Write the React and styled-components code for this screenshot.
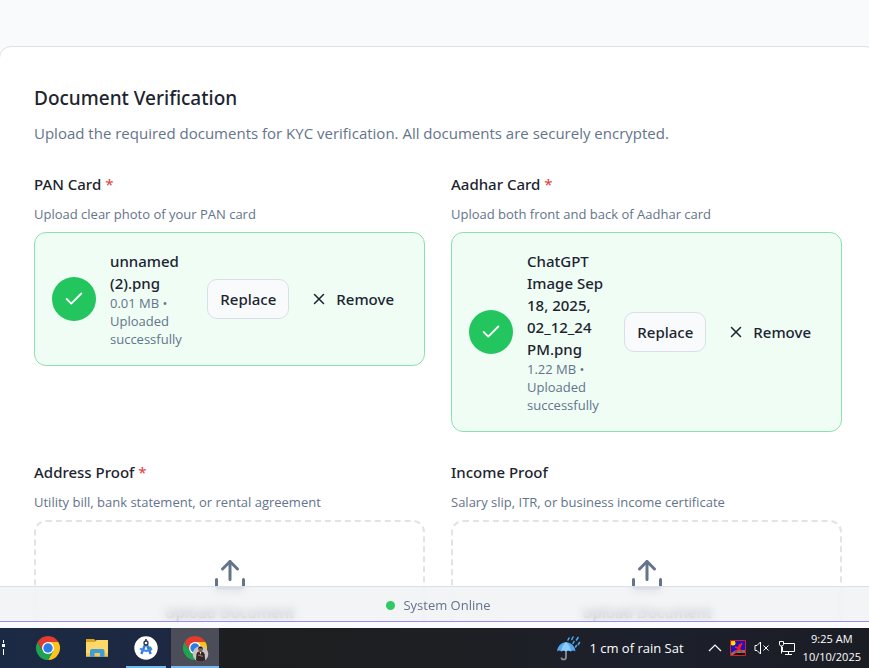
import React, { useId, useRef } from "react";
import styled, { createGlobalStyle } from "styled-components";
import { Check, Upload, X } from "lucide-react";

const lightText = '"Open Sans", "Noto Sans", sans-serif';

const Global = createGlobalStyle`
  *, *::before, *::after { box-sizing: border-box; }
  body {
    margin: 0;
    font-family: "Noto Sans", "Open Sans", sans-serif;
    color: #1c2430;
    background: #fbfbfe;
  }
  h1, p { margin: 0; }
  button { font: inherit; color: inherit; cursor: pointer; }
`;

const Desktop = styled.div`
  display: flex;
  flex-direction: column;
  height: 100vh;
`;

const Viewport = styled.div`
  position: relative;
  flex: 1;
  min-height: 0;
  overflow: hidden;
  margin-bottom: 6px;
  padding-top: 46px;
  background: #f9fafc;
  border-bottom: 1px solid #9c8fe6;
`;

const Panel = styled.main`
  margin: 0 -8px 0 -1px;
  padding: 36px 34px;
  background: #fff;
  border: 1px solid #d9e0ea;
  border-radius: 12px;
`;

const Title = styled.h1`
  font-size: 19px;
  line-height: 30px;
  font-weight: 500;
`;

const Subtitle = styled.p`
  margin-top: 8px;
  font-family: ${lightText};
  font-size: 15px;
  line-height: 24px;
  color: #64748b;
`;

const Fields = styled.div`
  display: grid;
  grid-template-columns: repeat(2, minmax(0, 1fr));
  gap: 28px 26px;
  align-items: start;
  margin-top: 27px;
`;

const Field = styled.section`
  display: flex;
  flex-direction: column;
  gap: 8px;
`;

const FieldLabel = styled.label`
  font-size: 15px;
  line-height: 24px;
  font-weight: 500;
`;

const Required = styled.span`
  font-weight: 400;
  color: #e5383b;
`;

const Hint = styled.p`
  font-family: ${lightText};
  font-size: 13px;
  line-height: 20px;
  color: #64748b;
`;

const FileCard = styled.div`
  display: flex;
  align-items: center;
  gap: 14px;
  padding: 17px;
  background: #effdf5;
  border: 1px solid #8ee0ae;
  border-radius: 12px;
`;

const CheckBadge = styled.span`
  display: flex;
  align-items: center;
  justify-content: center;
  flex: none;
  width: 44px;
  height: 44px;
  border-radius: 50%;
  background: #22c55e;
  color: #fff;
`;

const FileInfo = styled.div`
  flex: 1;
  min-width: 0;
`;

const FileName = styled.p`
  font-size: 15px;
  line-height: 22px;
  font-weight: 500;
`;

const FileMeta = styled.p`
  font-family: ${lightText};
  font-size: 13px;
  line-height: 18px;
  color: #64748b;
`;

const Actions = styled.div`
  display: flex;
  flex: none;
  gap: 8px;
`;

const ActionButton = styled.button`
  display: flex;
  align-items: center;
  gap: 8px;
  height: 40px;
  padding: 0 12px;
  font-size: 15px;
  font-weight: 500;
  border: 1px solid ${(p) => (p.$ghost ? "transparent" : "#d9dfea")};
  border-radius: 10px;
  background: ${(p) => (p.$ghost ? "transparent" : "#f9fafc")};
`;

const DropZone = styled.button`
  display: flex;
  flex-direction: column;
  align-items: center;
  gap: 7px;
  padding: 35px 16px;
  font-size: 15px;
  line-height: 24px;
  font-weight: 500;
  background: #fff;
  border: 2px dashed #e1e3e8;
  border-radius: 12px;

  svg { color: #64748b; }
`;

const StatusBar = styled.footer`
  position: absolute;
  inset: auto -8px 0 0;
  display: flex;
  align-items: center;
  justify-content: center;
  gap: 8px;
  height: 35px;
  padding-top: 2px;
  border-top: 1px solid #d9e0ea;
  background: rgba(238, 240, 243, 0.74);
  backdrop-filter: blur(4px);
  font-family: ${lightText};
  font-size: 13px;
  line-height: 20px;
  color: #64748b;
`;

const StatusDot = styled.span`
  width: 9px;
  height: 9px;
  border-radius: 50%;
  background: #30c965;
`;

const Taskbar = styled.nav`
  display: flex;
  flex: none;
  align-items: stretch;
  height: 40px;
  background: linear-gradient(90deg, #1b2a44 0, #1d2842 19%, #1d1e20 26%, #1e1f22 50%, #1c202c 75%, #1b1d24 100%);
  color: #fff;
`;

const Splitter = styled.span`
  display: flex;
  align-items: center;
  width: 24px;
`;

const Apps = styled.div`
  display: flex;
  gap: 1px;
`;

const AppButton = styled.button`
  display: flex;
  align-items: center;
  justify-content: center;
  width: 48px;
  padding: 0;
  border: 0;
  background: ${(p) => (p.$active ? "#4b4d58" : "transparent")};
  background-image: ${(p) => (p.$running || p.$active ? "linear-gradient(#76b9ed, #76b9ed)" : "none")};
  background-repeat: no-repeat;
  background-position: bottom;
  background-size: ${(p) => (p.$active ? "48px" : "40px")} 2px;
`;

const Tray = styled.div`
  display: flex;
  align-items: center;
  gap: 8px;
  margin-left: auto;
  padding-right: 8px;
`;

const TrayButton = styled.button`
  display: flex;
  align-items: center;
  gap: 8px;
  padding: 0;
  border: 0;
  background: none;
  font-family: ${lightText};
  font-size: 13px;
  color: #fff;
`;

const Weather = styled(TrayButton)`
  margin-right: 16px;
`;

const Clock = styled.time`
  font-family: ${lightText};
  font-size: 11px;
  line-height: 18px;
  text-align: center;
`;

function ChromeIcon({ avatar }) {
  return (
    <svg width="28" height="28" viewBox="0 0 28 28" aria-hidden="true">
      <path d="M14 8H24.4A12 12 0 0 1 14 26L19.2 17Z" fill="#fcc31e" />
      <path d="M3.6 8 8.8 17 14 20 19.2 17 14 26A12 12 0 0 1 3.6 8Z" fill="#1ea352" />
      <path d="M3.6 8A12 12 0 0 1 24.4 8H14L8.8 17Z" fill="#e33b2e" />
      <circle cx="14" cy="14" r="6" fill="#fff" />
      <circle cx="14" cy="14" r="4.7" fill="#2b7de9" />
      {avatar && (
        <g>
          <circle cx="19.5" cy="20" r="7.8" fill="#c9c4c3" />
          <path d="M15 26.3 15.5 20q.5-2 2.5-2.4h3q2.2.5 2.6 2.6l.6 6q-4.5 3.2-9.2.1Z" fill="#35242a" />
          <circle cx="19.5" cy="15.6" r="2.3" fill="#8a5e4c" />
          <path d="M17.2 15.2q0-2.6 2.3-2.6t2.3 2.6l-1-1h-2.6Z" fill="#241b1d" />
          <path d="M18.7 18h1.6l-.8 3Z" fill="#ddd" />
          <path d="m17 21 5 1.3" stroke="#9c7060" strokeWidth="1.2" />
        </g>
      )}
    </svg>
  );
}

function FolderIcon() {
  return (
    <svg width="24" height="24" viewBox="0 0 24 24" aria-hidden="true">
      <path d="M1 3h8l2 2v4H1Z" fill="#e2a21c" />
      <path d="M1 6h9l1.5-2H23v16.5H1Z" fill="#fbd867" />
      <path d="M1 17h22v3.5H1Z" fill="#f4c84e" />
      <path d="M5 21v-6q0-2 2-2h10.5q2 0 2 2v6H15v-4H9.5v4Z" fill="#3f9bdc" />
    </svg>
  );
}

function StudioIcon() {
  return (
    <svg width="24" height="24" viewBox="0 0 24 24" fill="none" aria-hidden="true">
      <circle cx="12" cy="12" r="11.7" fill="#fff" />
      <path d="M13 10.500h4l1.500 3.500-3 1Z" fill="#34a853" />
      <path d="M12 6.5 7.3 18M12 6.5 16.7 18" stroke="#3478e5" strokeWidth="2.4" />
      <path d="M6 12.5q6 4.6 11.5.3" stroke="#4285f4" strokeWidth="2.2" />
      <circle cx="12" cy="7" r="2" fill="#fff" stroke="#27364b" strokeWidth="1.3" />
      <path d="M12 3v2" stroke="#27364b" strokeWidth="1.6" />
    </svg>
  );
}

function UmbrellaIcon() {
  return (
    <svg width="25" height="25" viewBox="0 0 25 25" fill="none" aria-hidden="true">
      <path d="M10 8v13q0 2.5-2.3 2.5T5.5 21.5" stroke="#8d949d" strokeWidth="1.7" />
      <path d="M1 15.5Q2 7 10 6q8.5 1 9.5 9.5-2.3-2-4.6 0-2.4-2-4.9 0-2.4-2-4.7 0-2-2-4.3 0Z" fill="#56a9ef" />
      <path d="M5.3 15.5Q6 9 10 6q4 3 4.9 9.5-2.4-2-4.9 0-2.4-2-4.7 0Z" fill="#8cccfa" />
      <path d="m13 2-1 2m5-3-1.2 2.5M22 1.5 20.5 4M18 5.5 17 7.5M23.5 6.5l-1.2 2M20.5 9.5l-1 1.5" stroke="#4da8f4" strokeWidth="1.5" strokeLinecap="round" />
    </svg>
  );
}

function MonitorAppIcon() {
  return (
    <svg width="16" height="16" viewBox="0 0 16 16" aria-hidden="true">
      <path d="M0 0h16v16H0Z" fill="#1414c8" />
      <path d="M1 13l5-3h9v5H1Z" fill="#777" />
      <path d="M6 13h9v2H3Z" fill="#111" />
      <circle cx="3" cy="3" r="2.5" fill="#ffe600" />
      <path d="m5 7 3 1 2-4M12 3l-2 4-5 6M9 8l3 4" stroke="#ff1c1c" strokeWidth="1.6" fill="none" />
      <path d="M.5.5h15v15H.5Z" fill="none" stroke="#e81818" />
    </svg>
  );
}

function MutedIcon() {
  return (
    <svg width="16" height="16" viewBox="0 0 16 16" fill="none" stroke="#fff" aria-hidden="true">
      <path d="M1 5.5h2L6.5 2v12L3 10.5H1ZM9.500 5.5l5 5m0-5-5 5" />
    </svg>
  );
}

function NetworkIcon() {
  return (
    <svg width="17" height="16" viewBox="0 0 17 16" fill="none" stroke="#fff" aria-hidden="true">
      <path d="M5.5 3.5h11v8h-12V7M10.5 11.5v3M7 14.5h7M1.5 1.5h4v3q0 1.5-2 1.5t-2-1.5ZM3.5 6v7.5" />
    </svg>
  );
}

function ChevronUpIcon() {
  return (
    <svg width="14" height="14" viewBox="0 0 14 14" fill="none" stroke="#fff" strokeWidth="1.2" aria-hidden="true">
      <path d="m1 10 6-6 6 6" />
    </svg>
  );
}

function SplitterIcon() {
  return (
    <svg width="6" height="16" viewBox="0 0 6 16" fill="#fff" aria-hidden="true">
      <path d="M3 0h1v3H3ZM2 4h3v3H2ZM3 9h1v6H3Z" />
    </svg>
  );
}

const documents = [
  {
    label: "PAN Card",
    required: true,
    hint: "Upload clear photo of your PAN card",
    file: { name: "unnamed (2).png", size: "0.01 MB" },
  },
  {
    label: "Aadhar Card",
    required: true,
    hint: "Upload both front and back of Aadhar card",
    file: { name: "ChatGPT Image Sep 18, 2025, 02_12_24 PM.png", size: "1.22 MB" },
  },
  {
    label: "Address Proof",
    required: true,
    hint: "Utility bill, bank statement, or rental agreement",
  },
  {
    label: "Income Proof",
    hint: "Salary slip, ITR, or business income certificate",
  },
];

function DocumentField({ label, required, hint, file }) {
  const id = useId();
  const input = useRef(null);
  const browse = () => input.current.click();

  return (
    <Field>
      <FieldLabel htmlFor={id}>
        {label} {required && <Required>*</Required>}
      </FieldLabel>
      <Hint>{hint}</Hint>
      <input id={id} ref={input} type="file" hidden />
      {file ? (
        <FileCard>
          <CheckBadge>
            <Check size={22} strokeWidth={2} />
          </CheckBadge>
          <FileInfo>
            <FileName>{file.name}</FileName>
            <FileMeta>{`${file.size} • Uploaded successfully`}</FileMeta>
          </FileInfo>
          <Actions>
            <ActionButton type="button" onClick={browse}>Replace</ActionButton>
            <ActionButton type="button" $ghost>
              <X size={18} strokeWidth={2} />
              Remove
            </ActionButton>
          </Actions>
        </FileCard>
      ) : (
        <DropZone type="button" onClick={browse}>
          <Upload size={36} strokeWidth={2} />
          Upload Document
        </DropZone>
      )}
    </Field>
  );
}

export default function App() {
  return (
    <Desktop>
      <Global />
      <Viewport>
        <Panel>
          <Title>Document Verification</Title>
          <Subtitle>
            Upload the required documents for KYC verification. All documents are securely encrypted.
          </Subtitle>
          <Fields>
            {documents.map((doc) => (
              <DocumentField key={doc.label} {...doc} />
            ))}
          </Fields>
        </Panel>
        <StatusBar>
          <StatusDot />
          System Online
        </StatusBar>
      </Viewport>
      <Taskbar>
        <Splitter><SplitterIcon /></Splitter>
        <Apps>
          <AppButton aria-label="Chrome"><ChromeIcon /></AppButton>
          <AppButton aria-label="Files"><FolderIcon /></AppButton>
          <AppButton aria-label="Android Studio" $running><StudioIcon /></AppButton>
          <AppButton aria-label="Chrome profile" $active><ChromeIcon avatar /></AppButton>
        </Apps>
        <Tray>
          <Weather>
            <UmbrellaIcon />
            1 cm of rain Sat
          </Weather>
          <TrayButton aria-label="Hidden icons"><ChevronUpIcon /></TrayButton>
          <TrayButton aria-label="Monitor"><MonitorAppIcon /></TrayButton>
          <TrayButton aria-label="Volume"><MutedIcon /></TrayButton>
          <TrayButton aria-label="Network"><NetworkIcon /></TrayButton>
          <Clock>
            9:25 AM
            <br />
            10/10/2025
          </Clock>
        </Tray>
      </Taskbar>
    </Desktop>
  );
}
